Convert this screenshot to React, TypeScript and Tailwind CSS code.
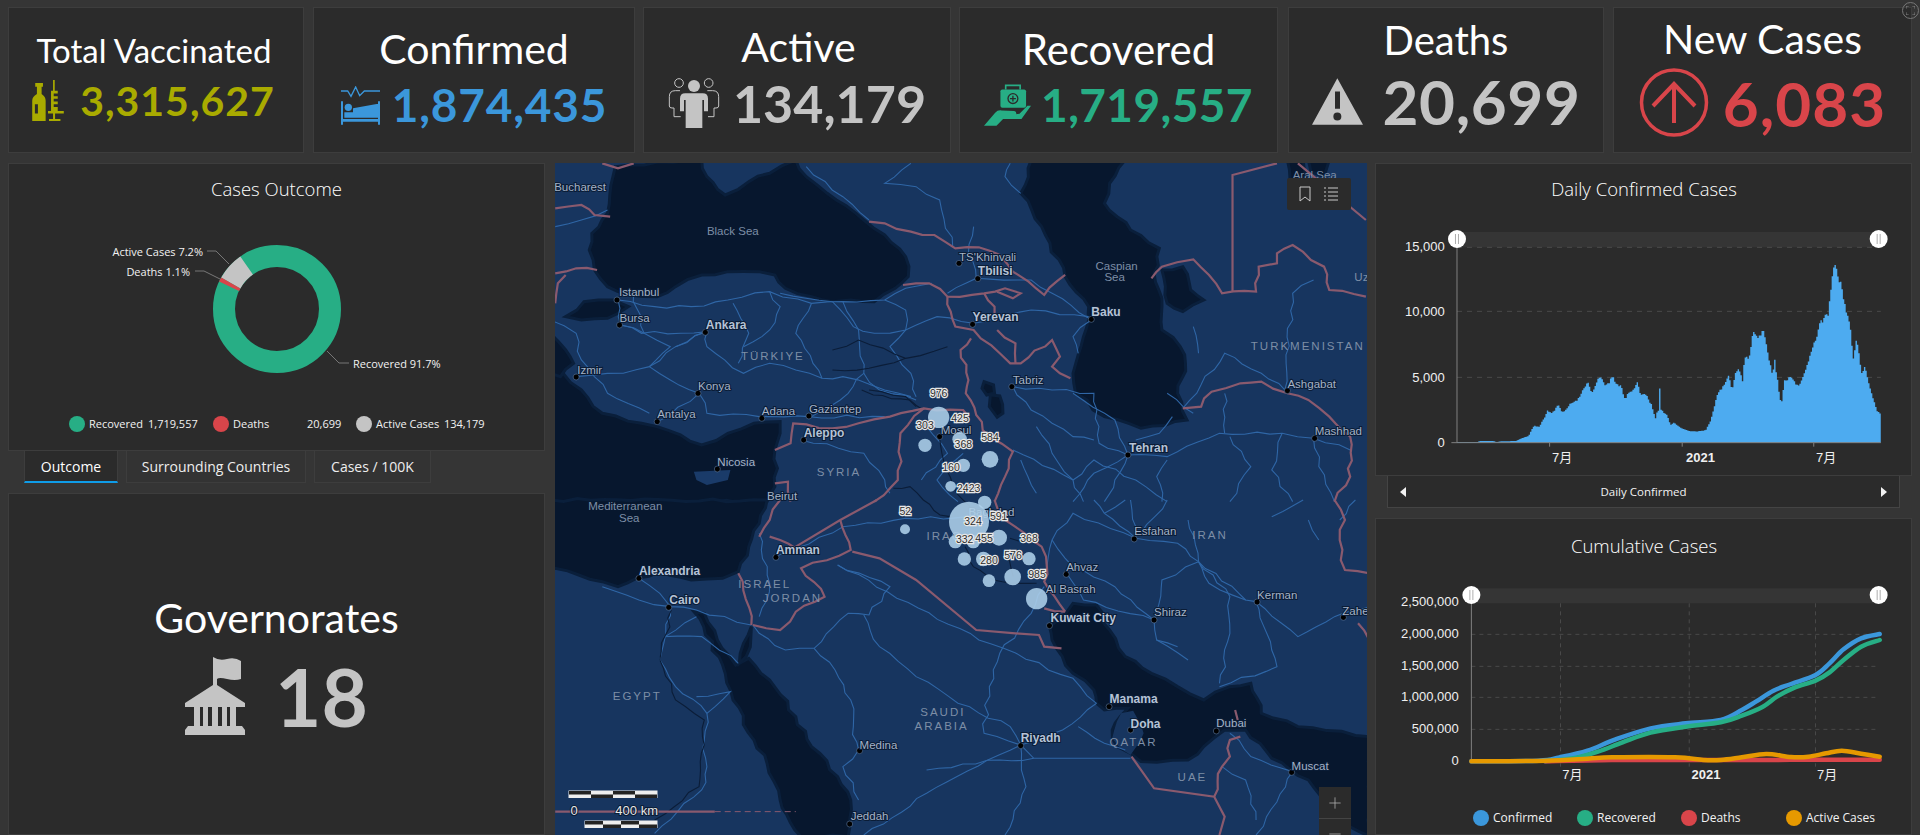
import { Minus, Plus } from "lucide-react";
import type { ReactNode } from "react";

type Pt = [number, number];

const uiFont = "font-['Open_Sans','Noto_Sans',sans-serif]";
const headFont = "font-['Lato','Open_Sans',sans-serif]";

const noise = (a: number) => {
  const s = Math.sin(a * 12.9898) * 43758.5453;
  return s - Math.floor(s) - 0.5;
};

// break long straight runs up so coasts and roads don't look ruled
function wiggle(d: string, amp: number) {
  return d
    .split("M")
    .filter((s) => s.trim())
    .map((sub) => {
      const closed = sub.includes("Z");
      const nums = sub.replace(/[LZ]/g, " ").trim().split(/[\s,]+/).map(Number);
      const pts: Pt[] = [];
      for (let i = 0; i + 1 < nums.length; i += 2) pts.push([nums[i], nums[i + 1]]);
      if (closed) pts.push(pts[0]);
      let out = `M${pts[0][0]},${pts[0][1]}`;
      for (let i = 1; i < pts.length; i++) {
        const [x0, y0] = pts[i - 1];
        const [x1, y1] = pts[i];
        const len = Math.hypot(x1 - x0, y1 - y0);
        const n = Math.max(1, Math.round(len / 26));
        for (let k = 1; k <= n; k++) {
          const t = k / n;
          const off = k === n ? 0 : noise(x0 * 0.7 + y0 * 1.3 + k) * amp * 2;
          const x = x0 + (x1 - x0) * t - ((y1 - y0) / (len || 1)) * off;
          const y = y0 + (y1 - y0) * t + ((x1 - x0) / (len || 1)) * off;
          out += ` L${x.toFixed(1)},${y.toFixed(1)}`;
        }
      }
      return out + (closed ? " Z" : "");
    })
    .join(" ");
}

// land / water outlines, written in the coordinates of two traced map crops
const topWater = [
  "M125,20 L290,0 300,50 335,105 380,65 420,40 470,0 490,50 530,100 600,180 640,225 680,290 685,350 660,385 620,425 575,420 540,425 500,410 450,385 430,345 400,335 340,335 290,345 240,380 205,410 150,405 110,380 85,330 75,270 80,220 110,160 Z",
  "M30,470 L65,425 120,420 150,440 110,475 60,480 Z",
  "M920,0 L1100,0 1070,70 1060,130 1110,210 1165,265 1155,340 1170,415 1170,510 1205,560 1215,610 1200,700 1218,780 1130,805 1060,770 1005,700 1000,640 1020,530 1030,480 1030,440 985,350 940,200 900,100 Z",
  "M1170,330 L1210,320 1225,390 1250,420 1210,455 1180,430 Z",
  "M1410,0 L1440,0 1445,50 1415,60 Z",
  "M1450,0 L1490,0 1480,50 1455,35 Z",
  "M830,665 L848,675 850,700 835,705 826,685 Z",
  "M842,705 L860,708 866,760 855,772 840,740 Z",
  "M0,640 L25,640 60,690 100,760 175,790 205,800 290,855 340,820 390,790 440,785 440,820 430,870 430,980 415,1025 0,1025 Z",
  "M0,520 L30,570 45,610 20,650 0,640 Z",
];

const bottomWater = [
  "M0,0 L415,0 400,70 380,140 360,215 330,235 270,240 210,215 165,235 130,260 100,245 55,225 10,205 0,210 Z",
  "M275,335 L295,340 320,420 355,495 380,475 420,540 470,650 500,740 550,830 575,900 570,1010 480,1010 440,900 415,790 390,720 350,600 330,495 Z",
  "M385,380 L375,470 362,490 370,430 Z",
  "M955,380 L1000,310 1045,315 1070,390 1100,470 1150,520 1200,560 1250,600 1300,560 1340,550 1360,640 1430,680 1568,710 1568,1010 1500,960 1450,840 1380,775 1330,690 1290,690 1250,740 1220,780 1130,785 1110,760 1085,740 1075,690 1090,650 1105,625 1060,630 1045,610 1040,570 1000,520 960,420 Z",
];

const qatar = "M1075,715 L1092,640 1115,632 1135,700 1110,765 1090,745 Z";

const topBorders = [
  "M610,185 L640,190 690,215 735,225 775,265 820,262 860,285 885,335 915,365 945,405 985,345",
  "M675,375 L725,370 760,410 830,400 870,385 900,400 885,415 855,395",
  "M760,410 L775,500 810,510 860,580 880,610 900,610 960,540 975,590 960,620 995,655",
  "M830,400 L850,440 850,470 M855,510 L890,550 890,610",
  "M805,535 L785,570 800,660 795,700 815,765 840,830 885,875 870,950 850,1025",
  "M430,870 L460,850 465,790 540,805 590,790 650,770 715,745 790,750 800,770",
  "M715,745 L670,820 665,960 620,1025",
  "M1210,745 L1245,740 1265,695 1320,670 1360,665 1410,700 1450,720 1490,770 1530,830 1530,950 1500,1025",
  "M1150,355 L1170,320 1230,298 1260,345 1285,400 1350,395 1355,320 1390,310 1390,280 1420,255 1455,300 1480,320 1490,390 1560,410",
  "M10,145 L60,135 85,165 115,170 M10,340 L50,325 90,330 M10,430 L15,370 30,345 M100,10 L130,25 160,10",
  "M430,970 L455,965 460,1025",
];

const straightBorders = ["M1305,395 L1305,45 1390,10 M1430,10 L1560,180"];

const bottomBorders = [
  "M555,60 L575,150 480,205 525,290 470,335 440,390 388,375",
  "M945,325 L985,335",
  "M850,0 L870,60 940,140 950,200 945,245 965,290 985,335",
  "M360,220 L385,375 M440,0 L420,60 400,110 M420,110 L440,120 470,145",
  "M1270,890 L1285,800 1300,770 1300,720 1320,710 M1310,630 L1315,660",
  "M1500,0 L1520,60 1510,120 1520,210 1568,220 M1545,370 L1568,440",
];

const straightBottomBorders = [
  "M625,0 L555,60 470,140",
  "M578,155 L630,175 700,240 815,390 890,400 935,405 945,440 978,445",
  "M1112,770 L1155,865 1270,890 1290,950 1280,1005",
  "M10,935 L315,935",
];

const topRoads = [
  "M10,200 L60,180 110,150",
  "M130,420 L200,440 270,440 340,420 420,395 500,430 560,425 640,420 680,385 730,370",
  "M130,420 L135,495 180,520 230,560 190,620 140,640 50,650",
  "M135,495 L175,520 300,515 300,560 370,640 420,610 470,630 520,655 560,650 640,690 690,710",
  "M300,515 L240,560 190,620 230,660 285,700 205,785",
  "M285,700 L300,760 400,770 495,770 640,770",
  "M420,395 L440,440 420,510 370,560",
  "M440,400 L540,425 580,500 620,520 680,510 740,470 810,490",
  "M560,425 L590,510 600,640 570,700 500,770",
  "M640,420 L680,450 680,510 650,560 690,640 700,710",
  "M600,640 L630,690 700,720",
  "M490,20 L560,110 610,180",
  "M690,10 L640,70 700,80 745,120 770,260",
  "M880,10 L870,50 900,100",
  "M810,200 L800,280 815,355 760,400",
  "M815,355 L920,360 960,400 1030,475",
  "M810,490 L920,450 1030,470",
  "M1035,480 L1000,530 1010,580",
  "M885,680 L960,690 1040,700 1050,850 1105,885",
  "M885,680 L920,750 1000,830 1040,840",
  "M1105,885 L1180,890 1280,820 1400,820 1460,835",
  "M1105,885 L1040,940 1000,1025",
  "M1105,885 L1080,960 1060,1025",
  "M1120,840 L1165,820 1190,770",
  "M1210,745 L1290,580 1360,640 1405,690",
  "M1460,835 L1530,870",
  "M1460,835 L1470,920 1500,1025",
  "M1405,690 L1420,400 1460,360",
  "M1230,500 L1240,580",
  "M480,840 L600,880 640,960 650,1000",
  "M790,880 L740,960 780,1025",
  "M885,870 L1000,960 1020,1025",
  "M1170,1025 L1160,950 1180,900",
  "M0,480 L50,520 60,600 110,700 190,760",
  "M240,560 L300,515",
  "M1290,700 L1290,820 M1180,700 L1230,760",
  "M160,400 L180,520 M350,430 L380,520 360,610 M500,430 L470,520 520,655",
  "M1000,960 L1040,900 1120,960 1180,1025 M930,800 L960,880 1000,960",
  "M1300,830 L1340,920 1300,1025 M1400,820 L1380,930 1420,1025",
  "M720,800 L760,880 710,960 M900,900 L930,1000 M1000,700 L1080,780 1105,885",
];

const bottomRoads = [
  "M170,235 L210,280 230,320",
  "M100,260 L170,300 230,320 280,330 385,375",
  "M230,320 L210,480 240,560 300,640 295,720 300,800 290,870 200,1000",
  "M280,350 L220,410 290,410 360,490",
  "M280,590 L345,575 300,640",
  "M388,375 L400,400 450,450 505,445 570,340 610,345 650,260 550,195",
  "M430,170 L470,145 560,80 680,55 800,50",
  "M550,195 L820,420 1000,535 1045,610",
  "M505,445 L545,510 575,600 580,680 590,750 560,800 590,900",
  "M600,345 L630,440 700,530 780,610 880,680 900,735",
  "M900,735 L830,700 840,560 860,460 920,340 945,260",
  "M900,735 L720,880 600,1005",
  "M900,735 L910,860 870,1005",
  "M925,775 L860,780 720,810",
  "M1045,610 L980,690 900,735",
  "M1010,680 L1060,730 1100,750",
  "M1120,115 L1060,40 1040,0",
  "M1120,115 L1000,40 960,120 950,220",
  "M1120,115 L1200,130 1240,185 1330,300 1350,305",
  "M1240,185 L1170,240 1155,360",
  "M1240,185 L1300,290 1300,400 1280,550",
  "M1350,305 L1430,410 1500,350 1568,320",
  "M1155,360 L1160,420 1200,440",
  "M990,225 L1020,300 1155,360",
  "M1350,305 L1380,450 1390,500 1280,560",
  "M1110,0 L1120,115",
  "M1180,0 L1130,100",
  "M1380,50 L1440,0",
  "M1450,60 L1470,120",
  "M1540,0 L1510,60",
  "M1300,700 L1340,770 1420,815",
  "M1285,800 L1330,840 1350,960",
  "M1420,815 L1370,950 1350,1005",
  "M400,100 L420,250 400,350",
  "M960,120 L1000,200 1080,260 1155,360 M1060,40 L1100,0 M1220,60 L1240,185",
  "M1160,420 L1220,480 M1330,300 L1260,250 1240,185",
];

const straightRoads = ["M900,735 L925,775 1110,775"];

const bubbles: [number, number, number][] = [
  [236, 142, 32], [195, 226, 20], [299, 208, 22], [390, 268, 25], [310, 286, 20], [272, 349, 16],
  [374, 397, 20], [327, 455, 60], [135, 478, 15], [286, 515, 20], [340, 515, 20], [417, 503, 24],
  [313, 567, 20], [370, 567, 22], [507, 566, 20], [387, 632, 19], [458, 621, 25], [530, 686, 32],
];

const bubbleLabels: [string, number, number][] = [
  ["976", 236, 72], ["425", 300, 148], ["303", 195, 169], ["368", 310, 227], ["584", 390, 205],
  ["160", 273, 295], ["2423", 326, 358], ["324", 339, 458], ["591", 416, 441], ["52", 136, 426],
  ["332", 314, 510], ["455", 372, 508], ["368", 507, 508], ["576", 459, 559], ["280", 387, 575], ["985", 531, 616],
];

// name, text x, text y, dot x, dot y, big
type City = [string, number, number, number?, number?, boolean?];

const topCities: City[] = [
  ["Bucharest", 8, 83], ["Istanbul", 132, 400, 128, 420], ["Bursa", 133, 477, 133, 495],
  ["Ankara", 298, 498, 297, 517, true], ["Izmir", 52, 632, 50, 651], ["Konya", 283, 680, 283, 700],
  ["Antalya", 205, 765, 205, 785], ["Adana", 405, 755, 405, 775], ["Gaziantep", 495, 750, 495, 768],
  ["Aleppo", 485, 822, 485, 840, true], ["Nicosia", 320, 910, 320, 927], ["TS'Khinvali", 782, 295, 782, 310],
  ["Tbilisi", 818, 336, 818, 356, true], ["Yerevan", 808, 474, 808, 493, true], ["Baku", 1035, 458, 1035, 478, true],
  ["Tabriz", 885, 662, 883, 680], ["Tehran", 1107, 865, 1105, 885, true], ["Ashgabat", 1410, 675, 1410, 692],
  ["Mashhad", 1462, 815, 1462, 835], ["Mosul", 747, 812, 745, 830], ["Beirut", 415, 1012],
];

const bottomCities: City[] = [
  ["Alexandria", 170, 214, 170, 235, true], ["Cairo", 228, 303, 227, 322, true], ["Amman", 432, 153, 432, 172, true],
  ["Medina", 592, 737, 592, 752], ["Riyadh", 900, 717, 900, 737, true], ["Jeddah", 575, 952, 573, 972],
  ["Kuwait City", 957, 357, 955, 377, true], ["Al Basrah", 948, 270], ["Ahvaz", 987, 204, 987, 223],
  ["Esfahan", 1117, 96, 1117, 117], ["Shiraz", 1155, 340, 1155, 360], ["Kerman", 1352, 289, 1352, 306],
  ["Zahe", 1515, 335, 1517, 352], ["Manama", 1070, 600, 1069, 620, true], ["Doha", 1110, 673, 1110, 690, true],
  ["Dubai", 1274, 673, 1274, 693], ["Muscat", 1418, 800, 1418, 817], ["Baghdad", 800, 40],
];

const topAreas: [string, number, number][] = [
  ["Black Sea", 300, 215], ["Caspian", 1043, 320], ["Sea", 1060, 353], ["Aral Sea", 1420, 48], ["SYRIA", 510, 940],
  ["TÜRKIYE", 365, 592], ["TURKMENISTAN", 1340, 562], ["Uz", 1538, 355],
];

const bottomAreas: [string, number, number][] = [
  ["Mediterranean", 73, 20], ["Sea", 132, 58], ["ISRAEL", 360, 254], ["JORDAN", 407, 298], ["EGYPT", 120, 592],
  ["SAUDI", 708, 640], ["ARABIA", 697, 682], ["QATAR", 1070, 728], ["UAE", 1200, 835], ["IRAN", 1228, 108], ["IRAQ", 720, 111],
];

const dailyTrace: Pt[] = [
  [248, 846], [305, 846], [310, 843], [350, 843], [360, 846], [370, 844], [415, 843], [430, 835], [450, 828], [465, 797],
  [480, 800], [495, 773], [505, 750], [515, 760], [525, 750], [535, 735], [545, 755], [555, 750], [565, 735], [590, 720],
  [610, 680], [618, 668], [630, 695], [640, 680], [650, 650], [660, 655], [670, 680], [690, 650], [700, 668], [715, 680],
  [725, 720], [735, 695], [750, 690], [760, 670], [770, 705], [785, 705], [800, 735], [812, 775], [818, 750], [823, 750],
  [824, 685], [827, 685], [828, 750], [845, 765], [855, 795], [865, 788], [885, 805], [905, 812], [930, 815], [955, 810],
  [970, 780], [990, 695], [1010, 675], [1020, 645], [1030, 690], [1040, 640], [1050, 625], [1060, 660], [1066, 590], [1080, 590],
  [1090, 520], [1105, 530], [1120, 505], [1130, 570], [1145, 640], [1152, 605], [1170, 735], [1180, 665], [1195, 650], [1220, 680],
  [1235, 645], [1250, 600], [1265, 550], [1280, 490], [1295, 470], [1305, 460], [1320, 315], [1335, 350], [1345, 400], [1355, 445],
  [1370, 520], [1375, 600], [1385, 530], [1400, 640], [1410, 620], [1425, 690], [1445, 755], [1456, 760],
];

function dailyPath() {
  let d = "M248,848";
  let seg = 0;
  for (let x = 248; x < 1456; x += 4) {
    while (dailyTrace[seg + 1][0] < x) seg++;
    const [x0, y0] = dailyTrace[seg];
    const [x1, y1] = dailyTrace[seg + 1];
    const y = y0 + ((y1 - y0) * (x - x0)) / (x1 - x0);
    const top = Math.min(848, y + noise(x) * (848 - y) * 0.05);
    d += ` L${x},${top.toFixed(1)} L${x + 4},${top.toFixed(1)}`;
  }
  return d + " L1456,848 Z";
}

// catmull-rom through the traced points
function smooth(pts: Pt[]) {
  let d = `M${pts[0][0]},${pts[0][1]}`;
  for (let i = 0; i < pts.length - 1; i++) {
    const p0 = pts[Math.max(0, i - 1)];
    const p1 = pts[i];
    const p2 = pts[i + 1];
    const p3 = pts[Math.min(pts.length - 1, i + 2)];
    const c1x = p1[0] + (p2[0] - p0[0]) / 6;
    const c1y = p1[1] + (p2[1] - p0[1]) / 6;
    const c2x = p2[0] - (p3[0] - p1[0]) / 6;
    const c2y = p2[1] - (p3[1] - p1[1]) / 6;
    d += ` C${c1x},${c1y} ${c2x},${c2y} ${p2[0]},${p2[1]}`;
  }
  return d;
}

const cumConfirmed: Pt[] = [[289, 754], [480, 752], [540, 742], [620, 722], [700, 688], [800, 655], [900, 640], [1000, 630], [1060, 600], [1100, 575], [1150, 542], [1200, 522], [1270, 495], [1310, 460], [1350, 418], [1400, 385], [1453, 372]];
const cumRecovered: Pt[] = [[500, 754], [580, 745], [650, 725], [720, 697], [800, 668], [900, 650], [1000, 637], [1060, 617], [1120, 590], [1160, 560], [1210, 533], [1270, 512], [1310, 487], [1350, 450], [1400, 410], [1453, 390]];
const cumDeaths: Pt[] = [[500, 754], [690, 750], [1000, 750], [1453, 749]];
const cumActive: Pt[] = [[289, 754], [500, 752], [620, 746], [690, 742], [870, 742], [950, 750], [1000, 750], [1060, 742], [1130, 732], [1200, 741], [1250, 740], [1300, 730], [1345, 722], [1400, 731], [1453, 740]];

function VaccineIcon() {
  return (
    <svg viewBox="0 0 94 122" className="h-[41px] w-[32px] shrink-0" fill="#a9ab00">
      <path fillRule="evenodd" d="M9,9 H32 V20 H28 V42 Q40,50 40,62 V122 H0 V62 Q0,50 14,42 V20 H9 Z M8,72 V100 H17 V72 Z" />
      <path d="M62,0 H67 V32 H76 V40 H64 V48 H76 V56 H64 V64 H76 V72 H64 V80 H76 V92 H94 V100 H68 V116 H84 V122 H50 V116 H62 V100 H47 V92 H56 V32 H62 Z" />
    </svg>
  );
}

function BedIcon() {
  return (
    <svg viewBox="0 0 117 115" className="h-[39px] w-[39px] shrink-0">
      <path d="M0,14 H20 L30,30 L44,2 L56,28 L70,14 H117" fill="none" stroke="#3b97db" strokeWidth="4" />
      <path fill="#3b97db" d="M0,45 H6 V98 H111 V45 H117 V115 H111 V106 H6 V115 H0 Z M36,66 L111,52 V94 H10 V78 H36 Z" />
      <circle cx="22" cy="63" r="11" fill="#3b97db" />
    </svg>
  );
}

function PeopleIcon() {
  return (
    <svg viewBox="0 0 156 150" className="h-[50px] w-[52px] shrink-0">
      <g fill="none" stroke="#c4c4c4" strokeWidth="3">
        <circle cx="33" cy="15" r="13" />
        <circle cx="122" cy="15" r="13" />
        <path d="M36,38 H22 Q4,38 4,56 V84 Q4,90 12,90 H18 V116 H38" />
        <path d="M118,38 H134 Q152,38 152,56 V84 Q152,90 144,90 H138 V116 H120" />
      </g>
      <g fill="#c4c4c4">
        <circle cx="78" cy="24" r="18" />
        <path d="M52,46 H104 Q120,46 120,62 V100 H108 V66 H103 V150 H53 V66 H48 V100 H36 V62 Q36,46 52,46 Z" />
      </g>
    </svg>
  );
}

function RecoveredIcon() {
  return (
    <svg viewBox="0 0 143 127" className="h-[42px] w-[47px] shrink-0">
      <path d="M66,16 V4 H110 V16" fill="none" stroke="#27ae85" strokeWidth="5" />
      <rect x="50" y="16" width="78" height="56" rx="6" fill="#27ae85" />
      <circle cx="88" cy="44" r="15" fill="none" stroke="#2b2b2b" strokeWidth="4" />
      <path d="M88,35 V53 M79,44 H97" stroke="#2b2b2b" strokeWidth="4" />
      <path fill="#27ae85" d="M0,127 L34,87 Q42,78 54,80 L92,82 Q100,84 98,92 L76,94 L108,90 L132,66 H143 L114,106 H58 L38,127 Z" />
    </svg>
  );
}

function WarningIcon() {
  return (
    <svg viewBox="0 0 153 140" className="h-[47px] w-[51px] shrink-0">
      <path fillRule="evenodd" fill="#c4c4c4" d="M76,0 L153,140 H0 Z M69,40 V92 H84 V40 Z M76,103 A12,12 0 1 0 76.1,127 A12,12 0 1 0 76,103 Z" />
    </svg>
  );
}

function UpCircleIcon() {
  return (
    <svg viewBox="0 0 70 69" className="h-[69px] w-[70px] shrink-0" fill="none" stroke="#d9454a">
      <circle cx="35" cy="34.5" r="32.5" strokeWidth="3.5" />
      <path d="M35,55 V16 M14,38 L35,16 L56,38" strokeWidth="4" />
    </svg>
  );
}

function GovIcon() {
  return (
    <svg viewBox="0 0 60 78" className="h-[78px] w-[60px] shrink-0" fill="#c4c4c4">
      <path d="M28,0 Q34,4 42,2 T56,4 V22 Q50,24 42,22 T32,22 V28 L60,46 V50 H0 V46 L28,28 Z" />
      <path d="M9,50 H15 V69 H9 Z M18,50 H23 V69 H18 Z M27,50 H33 V69 H27 Z M37,50 H42 V69 H37 Z M45,50 H51 V69 H45 Z" />
      <path d="M3,69 H57 L60,73 V78 H0 V73 Z" />
    </svg>
  );
}

type StatProps = {
  className: string;
  title: string;
  titleClass: string;
  value: string;
  valueClass: string;
  rowClass: string;
  icon: ReactNode;
};

function Stat({ className, title, titleClass, value, valueClass, rowClass, icon }: StatProps) {
  return (
    <div className={`flex flex-col items-center border border-[#3d3d3d] bg-[#2b2b2b] ${className}`}>
      <div className={`${headFont} leading-none text-white ${titleClass}`}>{title}</div>
      <div className={`flex items-center ${rowClass}`}>
        {icon}
        <span className={`${headFont} font-bold leading-none ${valueClass}`}>{value}</span>
      </div>
    </div>
  );
}

function MapLabels({ cities, areas, ox, oy }: { cities: City[]; areas: [string, number, number][]; ox: number; oy: number }) {
  const lx = (x: number) => x * 0.523 + ox;
  const ly = (y: number) => y / 3 + oy;
  return (
    <g>
      {areas.map(([name, x, y]) => (
        <text
          key={name + x}
          x={lx(x)}
          y={ly(y)}
          dominantBaseline="middle"
          className={`font-['Liberation_Sans',sans-serif] ${name === name.toUpperCase() ? "text-[11.5px] tracking-[2px]" : "text-[11.5px]"}`}
          fill="#7d8ea6"
        >
          {name}
        </text>
      ))}
      {cities.map(([name, x, y, dx, dy, big]) => (
        <g key={name}>
          {dx !== undefined && dy !== undefined && <circle cx={lx(dx)} cy={ly(dy)} r="3" fill="#000" stroke="#5d7ba3" strokeWidth="0.6" />}
          <text
            x={lx(x)}
            y={ly(y)}
            dominantBaseline="middle"
            className={`font-['Liberation_Sans',sans-serif] ${big ? "text-[12px] font-bold" : "text-[11.5px]"}`}
            fill={big ? "#b6c3d6" : "#a5b3c7"}
            stroke="#0a1c36"
            strokeWidth="2"
            paintOrder="stroke"
          >
            {name}
          </text>
        </g>
      ))}
    </g>
  );
}

function MapDrawing() {
  const t8 = "translate(-5,-3) scale(0.523,0.3333)";
  const t9 = "translate(-5,337) scale(0.523,0.3333)";
  const bx = (x: number) => 305 + x / 3;
  const by = (y: number) => 207 + y / 3;
  return (
    <svg viewBox="0 0 812 672" className="block h-full w-full">
      <rect width="812" height="672" fill="#17355f" />
      <g fill="#07172e">
        <g transform={t8}>
          {topWater.map((d) => (
            <path key={d} d={wiggle(d, 5)} stroke="#0a1f3b" strokeWidth="3" vectorEffect="non-scaling-stroke" />
          ))}
        </g>
        <g transform={t9}>
          {bottomWater.map((d) => (
            <path key={d} d={wiggle(d, 5)} stroke="#0a1f3b" strokeWidth="3" vectorEffect="non-scaling-stroke" />
          ))}
          <path d={wiggle(qatar, 3)} fill="#17355f" />
        </g>
        <g transform={t8}>
          <path d="M275,935 L345,930 340,960 300,975 280,960 Z" fill="#1a3b69" />
        </g>
      </g>
      <g fill="none" stroke="#2f66a6" strokeWidth="1.1">
        <g transform={t8}>
          {topRoads.map((d) => (
            <path key={d} d={wiggle(d, 5)} vectorEffect="non-scaling-stroke" />
          ))}
        </g>
        <g transform={t9}>
          {bottomRoads.map((d) => (
            <path key={d} d={wiggle(d, 5)} vectorEffect="non-scaling-stroke" />
          ))}
          {straightRoads.map((d) => (
            <path key={d} d={d} vectorEffect="non-scaling-stroke" />
          ))}
        </g>
      </g>
      <g fill="none" stroke="#0b1d38" strokeWidth="1.1">
        <g transform="translate(305,207) scale(0.3333)">
          {["M5,60 L40,75 150,90 190,120", "M100,355 L150,350 190,390 240,435 270,440", "M238,200 L260,300 290,370 330,410", "M315,530 L340,590 400,630 455,640 530,640", "M450,505 L530,520", "M440,550 L460,620"].map((d) => (
            <path key={d} d={wiggle(d, 4)} vectorEffect="non-scaling-stroke" />
          ))}
        </g>
        <g transform={t8}>
          <path d={wiggle("M540,570 L590,540 680,595 760,560 M540,630 L610,625 680,595 M610,690 L680,710 700,740", 5)} vectorEffect="non-scaling-stroke" />
        </g>
        <g transform={t9}>
          <path d={wiggle("M232,330 L210,480 240,600 295,660 285,860 200,960", 5)} vectorEffect="non-scaling-stroke" />
        </g>
      </g>
      <g fill="none" stroke="#8a5a6e" strokeWidth="2.2">
        <g transform={t8}>
          {topBorders.map((d) => (
            <path key={d} d={wiggle(d, 5)} vectorEffect="non-scaling-stroke" />
          ))}
          {straightBorders.map((d) => (
            <path key={d} d={d} vectorEffect="non-scaling-stroke" />
          ))}
        </g>
        <g transform={t9}>
          {bottomBorders.map((d) => (
            <path key={d} d={wiggle(d, 5)} vectorEffect="non-scaling-stroke" />
          ))}
          {straightBottomBorders.map((d) => (
            <path key={d} d={d} vectorEffect="non-scaling-stroke" />
          ))}
          <path d="M315,935 L470,935" strokeDasharray="6 4" strokeWidth="1" vectorEffect="non-scaling-stroke" />
        </g>
      </g>
      <MapLabels cities={topCities} areas={topAreas} ox={-5} oy={-3} />
      <MapLabels cities={bottomCities} areas={bottomAreas} ox={-5} oy={337} />
      {bubbles.map(([x, y, r]) => (
        <circle key={`${x}-${y}`} cx={bx(x)} cy={by(y)} r={r / 3} fill="#aed0ea" fillOpacity="0.88" />
      ))}
      {bubbleLabels.map(([name, x, y]) => (
        <text
          key={`${name}-${x}`}
          x={bx(x)}
          y={by(y)}
          textAnchor="middle"
          dominantBaseline="middle"
          className="font-['Liberation_Sans',sans-serif] text-[10.5px]"
          fill="#2d2d2d"
          stroke="#e8e8e8"
          strokeWidth="2.4"
          paintOrder="stroke"
        >
          {name}
        </text>
      ))}
      <g transform="translate(14,628)">
        <rect x="-0.5" y="-0.5" width="89" height="7.5" fill="#eee" />
        <rect x="15.5" y="29.5" width="73" height="7.5" fill="#eee" />
        {[0, 1, 2, 3].map((i) => (
          <g key={i}>
            <rect x={i * 22} y={i % 2 ? 3.5 : 0} width="22" height="3.5" fill="#222" />
            <rect x={16 + i * 18} y={i % 2 ? 33.5 : 30} width="18" height="3.5" fill="#222" />
          </g>
        ))}
        <text x="5" y="21" textAnchor="middle" dominantBaseline="middle" className="font-['Liberation_Sans',sans-serif] text-[13px]" fill="#e6e6e6" stroke="#0a1c36" strokeWidth="2" paintOrder="stroke">0</text>
        <text x="89" y="21" textAnchor="end" dominantBaseline="middle" className="font-['Liberation_Sans',sans-serif] text-[13px]" fill="#e6e6e6" stroke="#0a1c36" strokeWidth="2" paintOrder="stroke">400 km</text>
      </g>
    </svg>
  );
}

function MapPanel() {
  return (
    <div className="relative h-full w-[812px] shrink-0 overflow-hidden">
      <MapDrawing />
      <div className="absolute right-[16px] top-[15px] flex h-[32px] w-[64px] items-center justify-around rounded-[2px] bg-[#2b2b2b] px-[6px]">
        <svg viewBox="0 0 12 16" className="h-[16px] w-[12px]" fill="none" stroke="#c9c9c9" strokeWidth="1">
          <path d="M1,1 H11 V15 L6,11 L1,15 Z" />
        </svg>
        <svg viewBox="0 0 16 16" className="h-[16px] w-[16px]" fill="none" stroke="#c9c9c9" strokeWidth="1.2">
          <path d="M5,2 H15 M5,6 H15 M5,10 H15 M5,14 H15 M1,2 H3 M1,6 H3 M1,10 H3 M1,14 H3" />
        </svg>
      </div>
      <div className="absolute bottom-0 right-[16px] flex w-[32px] flex-col bg-[#2b2b2b] text-[#b5b5b5]">
        <div className="flex h-[32px] items-center justify-center border-b border-[#444]">
          <Plus size={18} strokeWidth={1} />
        </div>
        <div className="flex h-[16px] items-start justify-center pt-[6px]">
          <Minus size={18} strokeWidth={1} />
        </div>
      </div>
    </div>
  );
}

function OutcomePanel() {
  return (
    <div className="flex h-[288px] flex-col border border-[#3d3d3d] bg-[#2b2b2b]">
      <div className={`${uiFont} pt-[14px] text-center text-[18.5px] font-light leading-[22px] text-white`}>Cases Outcome</div>
      <svg viewBox="0 0 535 206" className={`${uiFont} block h-[206px] w-[535px]`}>
        <g transform="translate(268,109)">
          <circle r="53" fill="none" stroke="#27ae85" strokeWidth="22" />
          <g transform="rotate(-90)">
            <circle r="53" fill="none" stroke="#c4c4c4" strokeWidth="22" pathLength="360" strokeDasharray="25.6 334.4" strokeDashoffset="-299.4" />
            <circle r="53" fill="none" stroke="#d9454a" strokeWidth="22" pathLength="360" strokeDasharray="4 356" strokeDashoffset="-295.4" />
          </g>
        </g>
        <g fill="none" stroke="#777" strokeWidth="1">
          <path d="M198,51 H207 L220,64" />
          <path d="M186,71 H195 L211,79" />
          <path d="M318,151 L330,163 H340" />
        </g>
        <g className="text-[11px]" fill="#f2f2f2" dominantBaseline="middle">
          <text x="194" y="53" textAnchor="end">Active Cases 7.2%</text>
          <text x="181" y="73" textAnchor="end">Deaths 1.1%</text>
          <text x="344" y="165">Recovered 91.7%</text>
        </g>
      </svg>
      <div className={`${uiFont} mt-[10px] flex pl-[60px] text-[11px] leading-[16px] text-[#f2f2f2]`}>
        <div className="flex w-[144px] items-center">
          <span className="mr-[4px] size-[16px] rounded-full bg-[#27ae85]" />
          <span className="w-[59px]">Recovered</span>
          <span>1,719,557</span>
        </div>
        <div className="flex w-[143px] items-center">
          <span className="mr-[4px] size-[16px] rounded-full bg-[#d9454a]" />
          <span className="w-[74px]">Deaths</span>
          <span>20,699</span>
        </div>
        <div className="flex items-center">
          <span className="mr-[4px] size-[16px] rounded-full bg-[#c4c4c4]" />
          <span className="w-[68px]">Active Cases</span>
          <span>134,179</span>
        </div>
      </div>
    </div>
  );
}

function Tabs() {
  const idle = "mt-0 flex h-[32px] items-center justify-center border border-t-0 border-[#3d3d3d] bg-[#333333] text-[#eeeeee]";
  return (
    <div className={`${uiFont} flex h-[32px] pl-[16px] text-[14px]`}>
      <div className="flex h-[32px] w-[94px] items-center justify-center border-x border-[#3d3d3d] border-b-2 border-b-[#0f9ce8] bg-[#2b2b2b] text-white">Outcome</div>
      <div className={`${idle} ml-[8px] w-[180px]`}>Surrounding Countries</div>
      <div className={`${idle} ml-[8px] w-[117px]`}>Cases / 100K</div>
    </div>
  );
}

function GovPanel() {
  return (
    <div className="flex min-h-0 flex-1 flex-col items-center border border-[#3d3d3d] bg-[#2b2b2b] pt-[103px]">
      <div className={`${headFont} text-[41px] leading-[42px] text-white`}>Governorates</div>
      <div className="mt-[17px] flex items-center">
        <GovIcon />
        <span className={`${headFont} ml-[30px] text-[80px] font-bold leading-none text-[#c4c4c4]`}>18</span>
      </div>
    </div>
  );
}

function Handle({ x, y }: { x: number; y: number }) {
  return (
    <g transform={`translate(${x},${y})`}>
      <circle r="9" fill="#fff" />
      <path d="M-1.5,-5 V5 M1.5,-5 V5" stroke="#999" strokeWidth="0.8" />
    </g>
  );
}

function AxisLabels({ items, ax }: { items: [string, number][]; ax: number }) {
  return (
    <g className="font-['Liberation_Sans',sans-serif] text-[13px]" fill="#f0f0f0" textAnchor="end" dominantBaseline="middle">
      {items.map(([t, y]) => (
        <text key={t} x={ax} y={y}>{t}</text>
      ))}
    </g>
  );
}

function DailyPanel() {
  const sx = (x: number) => x * 0.3508 - 6;
  const sy = (y: number) => y / 3 - 50;
  const t = "translate(-6,-50) scale(0.3508,0.33333)";
  return (
    <div className="flex h-[313px] flex-col border border-[#3d3d3d] bg-[#2b2b2b]">
      <div className={`${uiFont} h-[46px] pt-[14px] pl-[1px] text-center text-[18.5px] font-light leading-[22px] text-white`}>Daily Confirmed Cases</div>
      <svg viewBox="0 0 535 265" className="block h-[265px] w-[535px]">
        <g transform={t}>
          <path d="M248,216 H1452 V262 H248 Z" fill="#353535" />
          <path d="M248,454 H1456 M248,652 H1456 M248,262 H1456" stroke="#4a4a4a" strokeWidth="1" strokeDasharray="5 5" vectorEffect="non-scaling-stroke" fill="none" />
          <path d={dailyPath()} fill="#4dabf0" />
          <path d="M248,240 V848 H1456 M232,848 H248 M512,848 V860 M890,848 V860 M1265,848 V860" stroke="#808080" strokeWidth="1" fill="none" vectorEffect="non-scaling-stroke" />
        </g>
        <Handle x={sx(248)} y={sy(237)} />
        <Handle x={sx(1450)} y={sy(237)} />
        <AxisLabels ax={sx(213)} items={[["15,000", sy(262)], ["10,000", sy(457)], ["5,000", sy(655)], ["0", sy(850)]]} />
        <g className="font-['Liberation_Sans','Noto_Sans_CJK_SC',sans-serif] text-[13px]" fill="#f0f0f0" textAnchor="middle" dominantBaseline="middle">
          <text x={sx(548)} y={sy(895)}>7月</text>
          <text x={sx(942)} y={sy(895)} className="font-bold">2021</text>
          <text x={sx(1300)} y={sy(895)}>7月</text>
        </g>
      </svg>
    </div>
  );
}

function DailyTab() {
  return (
    <div className={`${uiFont} mx-[12px] flex h-[32px] items-center justify-between border-x border-b border-[#444] bg-[#2b2b2b] px-[12px] text-[11.5px] text-[#f2f2f2]`}>
      <svg viewBox="0 0 6 10" className="h-[10px] w-[6px]" fill="#f2f2f2"><path d="M6,0 V10 L0,5 Z" /></svg>
      <span>Daily Confirmed</span>
      <svg viewBox="0 0 6 10" className="h-[10px] w-[6px]" fill="#f2f2f2"><path d="M0,0 V10 L6,5 Z" /></svg>
    </div>
  );
}

function CumulativePanel() {
  const sx = (x: number) => x * 0.3508 - 6;
  const sy = (y: number) => y / 3 - 55;
  const t = "translate(-6,-55) scale(0.3508,0.33333)";
  const line = { fill: "none", strokeLinecap: "round" as const, strokeWidth: 4.5, vectorEffect: "non-scaling-stroke" as const };
  return (
    <div className="flex min-h-0 flex-1 flex-col border border-[#3d3d3d] bg-[#2b2b2b]">
      <div className={`${uiFont} h-[46px] pt-[16px] pl-[1px] text-center text-[18.5px] font-light leading-[22px] text-white`}>Cumulative Cases</div>
      <svg viewBox="0 0 535 240" className="block h-[240px] w-[535px]">
        <g transform={t}>
          <path d="M289,235 H1450 V280 H289 Z" fill="#353535" />
          <path d="M289,373 H1450 M289,469 H1450 M289,562 H1450 M289,658 H1450 M543,280 V770 M910,280 V770 M1270,280 V770" stroke="#4a4a4a" strokeWidth="1" strokeDasharray="4 4" vectorEffect="non-scaling-stroke" fill="none" />
          <path d="M289,260 V754" stroke="#808080" strokeWidth="1" fill="none" vectorEffect="non-scaling-stroke" />
          <path d={smooth(cumConfirmed)} stroke="#3b97db" {...line} />
          <path d={smooth(cumRecovered)} stroke="#27ae85" {...line} />
          <path d={smooth(cumDeaths)} stroke="#d9454a" {...line} />
          <path d={smooth(cumActive)} stroke="#e69900" {...line} />
        </g>
        <Handle x={sx(289)} y={sy(255)} />
        <Handle x={sx(1450)} y={sy(255)} />
        <AxisLabels ax={sx(253)} items={[["2,500,000", sy(277)], ["2,000,000", sy(373)], ["1,500,000", sy(469)], ["1,000,000", sy(562)], ["500,000", sy(658)], ["0", sy(754)]]} />
        <g className="font-['Liberation_Sans','Noto_Sans_CJK_SC',sans-serif] text-[13px]" fill="#f0f0f0" textAnchor="middle" dominantBaseline="middle">
          <text x={sx(577)} y={sy(797)}>7月</text>
          <text x={sx(958)} y={sy(797)} className="font-bold">2021</text>
          <text x={sx(1303)} y={sy(797)}>7月</text>
        </g>
      </svg>
      <div className={`${uiFont} mt-[5px] flex pl-[97px] text-[12px] leading-[16px] text-[#f2f2f2]`}>
        <div className="flex w-[104px] items-center"><span className="mr-[4px] size-[16px] rounded-full bg-[#3b97db]" />Confirmed</div>
        <div className="flex w-[104px] items-center"><span className="mr-[4px] size-[16px] rounded-full bg-[#27ae85]" />Recovered</div>
        <div className="flex w-[105px] items-center"><span className="mr-[4px] size-[16px] rounded-full bg-[#d9454a]" />Deaths</div>
        <div className="flex items-center"><span className="mr-[4px] size-[16px] rounded-full bg-[#e69900]" />Active Cases</div>
      </div>
    </div>
  );
}

export default function App() {
  return (
    <div className="relative h-[835px] w-[1920px] overflow-hidden bg-[#353535] pl-[8px] pr-[8px] pt-[7px]">
      <div className="flex h-[146px]">
        <Stat className="w-[296px] pt-[26px]" title="Total Vaccinated" titleClass="mr-[4px] text-[33px]" value="3,315,627" valueClass="ml-[16px] text-[41px] tracking-[1px] text-[#a9ab00]" rowClass="mt-[13px] mr-[5px]" icon={<VaccineIcon />} />
        <Stat className="ml-[9px] w-[322px] pt-[20px]" title="Confirmed" titleClass="text-[41px]" value="1,874,435" valueClass="ml-[12px] text-[46px] tracking-[0.8px] text-[#3b97db]" rowClass="mt-[13px]" icon={<BedIcon />} />
        <Stat className="ml-[8px] w-[308px] pt-[18px]" title="Active" titleClass="ml-[3px] text-[41px]" value="134,179" valueClass="ml-[13px] text-[52px] text-[#c4c4c4]" rowClass="mt-[10px]" icon={<PeopleIcon />} />
        <Stat className="ml-[8px] w-[319px] pt-[20px]" title="Recovered" titleClass="text-[42px]" value="1,719,557" valueClass="ml-[10px] text-[46px] tracking-[0.4px] text-[#27ae85]" rowClass="mt-[12px]" icon={<RecoveredIcon />} />
        <Stat className="ml-[10px] w-[316px] pt-[12px]" title="Deaths" titleClass="text-[40px]" value="20,699" valueClass="ml-[20px] text-[62px] tracking-[0.6px] text-[#c4c4c4]" rowClass="mt-[10px]" icon={<WarningIcon />} />
        <Stat className="ml-[9px] w-[299px] pt-[10px]" title="New Cases" titleClass="text-[41px]" value="6,083" valueClass="ml-[14px] text-[62px] tracking-[1px] text-[#d9454a]" rowClass="mt-[9px]" icon={<UpCircleIcon />} />
      </div>
      <div className="mt-[10px] flex h-[672px]">
        <div className="flex w-[537px] shrink-0 flex-col">
          <OutcomePanel />
          <Tabs />
          <div className="h-[10px] shrink-0" />
          <GovPanel />
        </div>
        <div className="ml-[10px]">
          <MapPanel />
        </div>
        <div className="ml-[8px] flex w-[537px] shrink-0 flex-col">
          <DailyPanel />
          <DailyTab />
          <div className="h-[10px] shrink-0" />
          <CumulativePanel />
        </div>
      </div>
      <div className="absolute right-[1px] top-[2px] flex size-[17px] items-center justify-center rounded-full border border-[#777]">
        <svg viewBox="0 0 10 10" className="size-[9px]" fill="none" stroke="#8a8a8a" strokeWidth="1">
          <path d="M0,3 V0 H3 M7,0 H10 V3 M10,7 V10 H7 M3,10 H0 V7" />
        </svg>
      </div>
    </div>
  );
}
